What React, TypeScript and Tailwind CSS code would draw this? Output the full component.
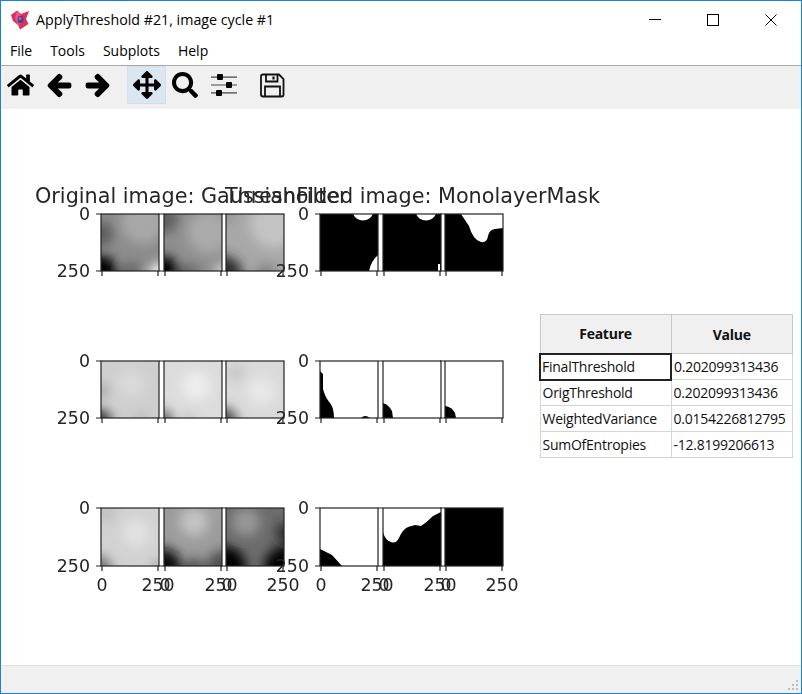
import { FaArrowLeft, FaArrowRight, FaArrowsAlt, FaHome, FaSearch } from 'react-icons/fa';

type Blob = [number, number, number, string];

const ROWS = [
	{ top: 214, bottom: 271 },
	{ top: 361, bottom: 418 },
	{ top: 508, bottom: 566 },
];

const AXES_LEFT = [101, 164, 226];
const AXES_RIGHT = [320, 383, 445];
const AXIS_W = 58;

const GREY: Blob[][][] = [
	[
		[[42, 8, 22, '#a8a8a8'], [-2, 60, 19, '#000000'], [60, 60, 11, '#ffffff'], [0, 20, 12, '#5c5c5c'], [30, 58, 10, '#666666']],
		[[45, 18, 22, '#aaaaaa'], [-2, 60, 18, '#000000'], [60, 58, 10, '#cccccc'], [0, 5, 14, '#5e5e5e'], [25, 60, 10, '#666666']],
		[[48, 10, 24, '#c4c4c4'], [-2, 60, 18, '#2c2c2c'], [40, 60, 10, '#808080'], [0, 0, 10, '#949494']],
	],
	[
		[[-2, 60, 12, '#303030'], [0, 30, 8, '#a8a8a8'], [30, 22, 14, '#dadada'], [40, 58, 6, '#b4b4b4']],
		[[-2, 60, 11, '#606060'], [32, 25, 14, '#eeeeee'], [25, 58, 6, '#c0c0c0']],
		[[-2, 60, 13, '#484848'], [35, 30, 14, '#e8e8e8'], [10, 12, 8, '#c4c4c4']],
	],
	[
		[[-2, 60, 12, '#707070'], [35, 25, 14, '#e2e2e2'], [60, 60, 8, '#a0a0a0'], [5, 5, 10, '#c0c0c0']],
		[[-2, 60, 20, '#0c0c0c'], [60, 60, 18, '#505050'], [30, 14, 14, '#c4c4c4'], [58, 0, 10, '#a0a0a0'], [30, 60, 10, '#505050']],
		[[-2, 60, 22, '#000000'], [60, 60, 22, '#000000'], [60, 25, 10, '#282828'], [20, 14, 14, '#989898']],
	],
];

const BASES = [
	['#8c8c8c', '#8f8f8f', '#a8a8a8'],
	['#cfcfcf', '#dcdcdc', '#dadada'],
	['#d2d2d2', '#9c9c9c', '#6c6c6c'],
];

// mask tiles: background colour, then shapes in the other colour
const MASKS: { bg: string; fill: string; d: string }[][] = [
	[
		{ bg: '#000', fill: '#fff', d: 'M33,0 Q36,6 43,6.5 Q50,6 53,0 Z M49,57 Q51,47 58,41 L58,57 Z' },
		{ bg: '#000', fill: '#fff', d: 'M33,0 Q36,6 43,6.5 Q50,6 53,0 Z M55,57 L55,50 L57,50 L57,57 Z' },
		{ bg: '#000', fill: '#fff', d: 'M16,0 L24,12 Q28,26 36,28 Q42,29 43,22 Q44,16 50,15 L58,14 L58,0 Z' },
	],
	[
		{ bg: '#fff', fill: '#000', d: 'M0,10 L3,13 L3,28 Q5,36 10,42 Q14,47 14,57 L0,57 Z M41,57 Q45,53 50,57 Z' },
		{ bg: '#fff', fill: '#000', d: 'M0,42 Q6,44 9,50 L10,57 L0,57 Z' },
		{ bg: '#fff', fill: '#000', d: 'M0,45 Q7,46 10,52 L11,57 L0,57 Z' },
	],
	[
		{ bg: '#fff', fill: '#000', d: 'M0,41 L12,47 L22,58 L0,58 Z' },
		{ bg: '#fff', fill: '#000', d: 'M0,24 Q2,32 8,34 Q13,36 16,30 Q19,22 25,19 L32,17 L38,18 Q44,14 50,8 L58,4 L58,58 L0,58 Z' },
		{ bg: '#000', fill: '#000', d: '' },
	],
];

const TABLE = [
	['FinalThreshold', '0.202099313436'],
	['OrigThreshold', '0.202099313436'],
	['WeightedVariance', '0.0154226812795'],
	['SumOfEntropies', '-12.8199206613'],
];

const tickText = { fontSize: 17.4, fill: '#262626' };

function Ticks({ x, top, bottom, yLabels, xLabels }: { x: number; top: number; bottom: number; yLabels: boolean; xLabels: boolean }) {
	const h = bottom - top;
	return (
		<g>
			<rect x={x} y={top} width={AXIS_W} height={h} fill="none" stroke="#222" strokeWidth="1.2" />
			<path d={`M${x},${top} h-5 M${x},${bottom} h-5 M${x + 1},${bottom} v5 M${x + AXIS_W - 1},${bottom} v5`} stroke="#222" strokeWidth="1.2" />
			{yLabels && (
				<>
					<text x={x - 11} y={top + 6} textAnchor="end" {...tickText}>0</text>
					<text x={x - 11} y={bottom + 6} textAnchor="end" {...tickText}>250</text>
				</>
			)}
			{xLabels && (
				<>
					<text x={x + 1} y={bottom + 25} textAnchor="middle" {...tickText}>0</text>
					<text x={x + AXIS_W - 1} y={bottom + 25} textAnchor="middle" {...tickText}>250</text>
				</>
			)}
		</g>
	);
}

function Figure() {
	return (
		<svg
			viewBox="1 109 800 556"
			className="absolute inset-0 w-[800px] h-[556px] blur-[0.5px]"
			style={{ fontFamily: '"DejaVu Sans", sans-serif' }}>
			<defs>
				<filter id="soft" x="-100%" y="-100%" width="300%" height="300%">
					<feGaussianBlur stdDeviation="6" />
				</filter>
				{ROWS.map((row, r) =>
					AXES_LEFT.map((x, c) => (
						<clipPath id={`clip-${r}-${c}`} key={`${r}-${c}`}>
							<rect x={x} y={row.top} width={AXIS_W} height={row.bottom - row.top} />
						</clipPath>
					)),
				)}
			</defs>
			<text x="35" y="203" fontSize="20.75" fill="#262626">Original image: GaussianFilter</text>
			<text x="225" y="203" fontSize="20.75" fill="#262626">Thresholded image: MonolayerMask</text>
			{ROWS.map((row, r) => (
				<g key={r}>
					{AXES_LEFT.map((x, c) => (
						<g key={c}>
							<g clipPath={`url(#clip-${r}-${c})`}>
								<rect x={x} y={row.top} width={AXIS_W} height={row.bottom - row.top} fill={BASES[r][c]} />
								<g transform={`translate(${x} ${row.top})`} filter="url(#soft)">
									{GREY[r][c].map(([cx, cy, rad, color], i) => (
										<circle key={i} cx={cx} cy={cy} r={rad} fill={color} />
									))}
								</g>
							</g>
							<Ticks x={x} top={row.top} bottom={row.bottom} yLabels={c === 0} xLabels={r === 2} />
						</g>
					))}
					{AXES_RIGHT.map((x, c) => (
						<g key={c}>
							<rect x={x} y={row.top} width={AXIS_W} height={row.bottom - row.top} fill={MASKS[r][c].bg} />
							<path transform={`translate(${x} ${row.top})`} d={MASKS[r][c].d} fill={MASKS[r][c].fill} />
							<Ticks x={x} top={row.top} bottom={row.bottom} yLabels={c === 0} xLabels={r === 2} />
						</g>
					))}
				</g>
			))}
		</svg>
	);
}

function ToolbarIcons() {
	return (
		<div className="h-[43px] bg-[#f0f0f0] flex items-start text-black">
			<div className="flex items-center h-[38px] pl-[6px]">
				<FaHome className="w-[27px] h-[24px]" />
				<FaArrowLeft className="w-[25px] h-[25px] ml-[13px] stroke-[40px]" stroke="currentColor" />
				<FaArrowRight className="w-[25px] h-[25px] ml-[13px] stroke-[40px]" stroke="currentColor" />
				<div className="w-[39px] h-[38px] ml-[17px] flex items-center justify-center bg-[#dbe6f0] border border-[#d3dfeb]">
					<FaArrowsAlt className="w-[28px] h-[28px]" />
				</div>
				<FaSearch className="w-[26px] h-[26px] ml-[6px]" />
				<svg viewBox="0 0 26 24" className="w-[26px] h-[24px] ml-[13px]" fill="#000">
					<path d="M0 3.5h26v1.2H0zM0 11.4h26v1.2H0zM0 19.2h26v1.2H0z" fill="#444" />
					<rect x="6" y="1" width="6" height="6" rx="1" />
					<rect x="15" y="9" width="6" height="6" rx="1" />
					<rect x="5" y="17" width="6" height="6" rx="1" />
				</svg>
				<svg viewBox="0 0 25 25" className="w-[25px] h-[25px] ml-[23px]" fill="none" stroke="#111" strokeWidth="1.8">
					<path d="M3 1.5 H19 L23.5 6 V21.5 Q23.5 23.5 21.5 23.5 H3 Q1 23.5 1 21.5 V3.5 Q1 1.5 3 1.5 Z" />
					<path d="M6 1.5 V8.5 H17.5 V1.5 M5 23.5 V13.5 H20 V23.5" />
					<path d="M13.5 3.5 V6.5" strokeWidth="2.2" />
				</svg>
			</div>
		</div>
	);
}

export default function App() {
	return (
		<div
			className="w-[802px] h-[694px] border border-[#1883d7] bg-white flex flex-col overflow-hidden text-[14px] text-black"
			style={{ fontFamily: '"Open Sans", sans-serif' }}>
			<div className="h-[38px] flex items-center shrink-0 pr-[1px]">
				<svg viewBox="0 0 20 20" className="w-[20px] h-[20px] ml-[9px]">
					<path d="M1 5 L7 0.5 L11 4 L19 1 L16 9 L18.5 14 L10 19.5 L8 15 L3 11 Z" fill="#dc2f5a" />
					<path d="M7 0.5 L11 4 L13 13 L8 15 L5 8 Z" fill="#ee5a80" />
					<ellipse cx="10.5" cy="9.5" rx="3" ry="4" fill="#5a3a8c" />
					<ellipse cx="10" cy="8.5" rx="1.3" ry="1.7" fill="#8a78c0" />
				</svg>
				<span className="ml-[6px] flex-1 text-[14.25px]">ApplyThreshold #21, image cycle #1</span>
				<div className="w-[58px] h-[37px] flex items-center justify-center">
					<svg width="12" height="12" viewBox="0 0 12 12"><path d="M0 5.5h12" stroke="#000" /></svg>
				</div>
				<div className="w-[58px] h-[37px] flex items-center justify-center">
					<svg width="12" height="12" viewBox="0 0 12 12"><rect x=".5" y=".5" width="11" height="11" fill="none" stroke="#000" /></svg>
				</div>
				<div className="w-[58px] h-[37px] flex items-center justify-center">
					<svg width="12" height="12" viewBox="0 0 12 12"><path d="M.5.5l11 11M11.5.5l-11 11" stroke="#000" /></svg>
				</div>
			</div>
			<div className="h-[27px] flex items-center shrink-0 pl-[9px] pb-[3px] gap-[18px] border-b border-[#a8a8a8]">
				<span>File</span>
				<span>Tools</span>
				<span>Subplots</span>
				<span>Help</span>
			</div>
			<ToolbarIcons />
			<div className="relative flex-1">
				<Figure />
				<table className="absolute left-[538px] top-[205px] w-[254px] table-fixed border-collapse text-[#111] tracking-[-0.25px]">
					<thead>
						<tr className="h-[39px] bg-[#f0f0f0]">
							<th className="w-[131px] border border-[#c8c8c8] font-bold">Feature</th>
							<th className="border border-[#c8c8c8] font-bold">Value</th>
						</tr>
					</thead>
					<tbody>
						{TABLE.map(([name, value], i) => (
							<tr key={name} className="h-[26px]">
								<td className={i === 0 ? 'border-2 border-[#222] pl-[1px] whitespace-nowrap' : 'border border-[#d4d4d4] pl-[2px] whitespace-nowrap'}>
									{name}
								</td>
								<td className="border border-[#d4d4d4] pl-[2px] whitespace-nowrap">{value}</td>
							</tr>
						))}
					</tbody>
				</table>
			</div>
			<div className="h-[28px] shrink-0 bg-[#f0f0f0] border-t border-[#e2e2e2] flex justify-end items-end pr-[2px] pb-[2px]">
				<svg width="11" height="11" viewBox="0 0 11 11" fill="#bdbdbd">
					<rect x="8" y="0" width="2" height="2" />
					<rect x="4" y="4" width="2" height="2" />
					<rect x="8" y="4" width="2" height="2" />
					<rect x="0" y="8" width="2" height="2" />
					<rect x="4" y="8" width="2" height="2" />
					<rect x="8" y="8" width="2" height="2" />
				</svg>
			</div>
		</div>
	);
}
